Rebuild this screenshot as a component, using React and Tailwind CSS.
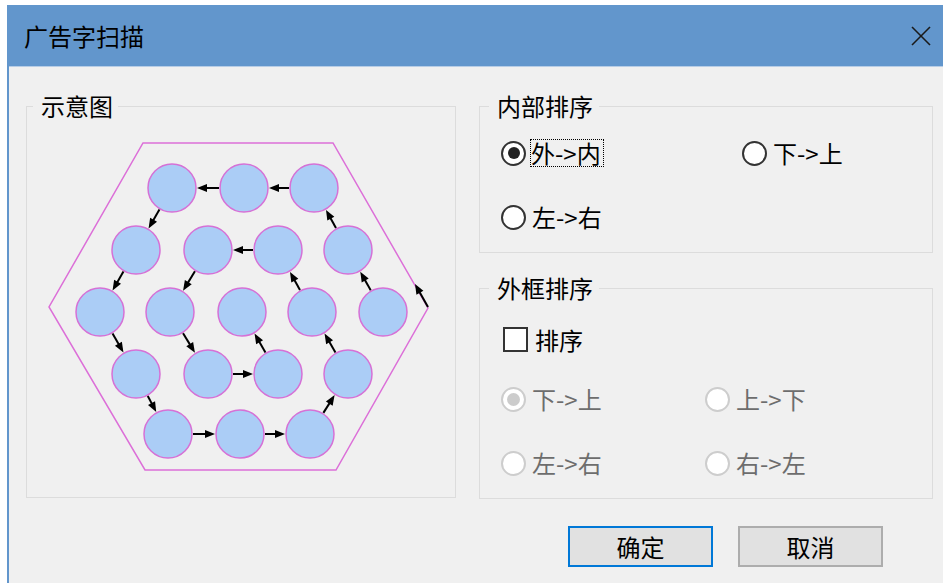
import React from "react";

const FONT = { fontFamily: '"Noto Sans CJK SC", "Noto Sans", sans-serif' };

const circles = [
  [172, 188], [244, 188], [314, 188],
  [136, 250], [208, 250], [278, 250], [348, 250],
  [100, 312], [170, 312], [242, 312], [312, 312], [383, 312],
  [136, 374], [208, 374], [278, 374], [348, 374],
  [168, 434], [240, 434], [310, 434],
];

const arrows = [
  [[314, 188], [244, 188]],
  [[244, 188], [172, 188]],
  [[172, 188], [136, 250]],
  [[136, 250], [100, 312]],
  [[100, 312], [136, 374]],
  [[136, 374], [168, 434]],
  [[168, 434], [240, 434]],
  [[240, 434], [310, 434]],
  [[310, 434], [348, 374]],
  [[348, 374], [312, 312]],
  [[312, 312], [278, 250]],
  [[278, 250], [208, 250]],
  [[208, 250], [170, 312]],
  [[170, 312], [208, 374]],
  [[208, 374], [278, 374]],
  [[278, 374], [242, 312]],
  [[383, 312], [348, 250]],
  [[348, 250], [314, 188]],
];

function Arrow({ from, to, r = 25 }) {
  const dx = to[0] - from[0];
  const dy = to[1] - from[1];
  const len = Math.hypot(dx, dy);
  const ux = dx / len;
  const uy = dy / len;
  const sx = from[0] + ux * r;
  const sy = from[1] + uy * r;
  const ex = to[0] - ux * r;
  const ey = to[1] - uy * r;
  return <ArrowSeg sx={sx} sy={sy} ex={ex} ey={ey} />;
}

function ArrowSeg({ sx, sy, ex, ey }) {
  const dx = ex - sx;
  const dy = ey - sy;
  const len = Math.hypot(dx, dy);
  const ux = dx / len;
  const uy = dy / len;
  const bx = ex - ux * 10;
  const by = ey - uy * 10;
  const px = -uy * 4;
  const py = ux * 4;
  return (
    <g>
      <line x1={sx} y1={sy} x2={bx + ux * 2} y2={by + uy * 2} stroke="#000" strokeWidth="2" />
      <polygon points={`${ex},${ey} ${bx + px},${by + py} ${bx - px},${by - py}`} fill="#000" />
    </g>
  );
}

function Diagram() {
  return (
    <svg width="427" height="378" viewBox="27 118 427 378" className="block">
      <polygon
        points="143,143 333,143 428,308 336,470 145,470 49,307"
        fill="none"
        stroke="#dc6fd8"
        strokeWidth="1.5"
      />
      {circles.map(([x, y], i) => (
        <circle key={i} cx={x} cy={y} r="24" fill="#abcdf6" stroke="#d671d6" strokeWidth="1.5" />
      ))}
      {arrows.map(([a, b], i) => (
        <Arrow key={i} from={a} to={b} />
      ))}
      <ArrowSeg sx={428} sy={307} ex={415} ey={284} />
    </svg>
  );
}

function Radio({ checked, disabled, label, focus }) {
  return (
    <div className="flex items-center h-[30px]">
      <div
        className={
          disabled
            ? "w-[25px] h-[25px] rounded-full border-2 border-[#cdcdcd] bg-white flex items-center justify-center shrink-0"
            : "w-[25px] h-[25px] rounded-full border-2 border-[#333333] bg-white flex items-center justify-center shrink-0"
        }
      >
        {checked && (
          <div
            className={
              disabled
                ? "w-[13px] h-[13px] rounded-full bg-[#cccccc]"
                : "w-[12px] h-[12px] rounded-full bg-[#222222]"
            }
          />
        )}
      </div>
      <span
        className={
          (disabled ? "text-[#6d6d6d] " : "text-black ") +
          (focus
            ? "ml-[4px] border border-dotted border-black py-[1px] pr-[2px] leading-[24px] text-[24px] whitespace-nowrap"
            : "ml-[6px] leading-[24px] text-[24px] whitespace-nowrap")
        }
      >
        {label}
      </span>
    </div>
  );
}

function Legend({ children, ml, pr }) {
  return (
    <legend className={`${ml} pl-[8px] ${pr} text-[24px] leading-[24px] text-black`}>{children}</legend>
  );
}

export default function App() {
  return (
    <div className="w-[943px] h-[583px] bg-white pt-[5px] pl-[7px] overflow-hidden" style={FONT}>
      <div className="flex flex-col h-[578px] border-l-2 border-[#6296cc] bg-[#f0f0f0]">
        <div className="h-[62px] shrink-0 bg-[#6296cc] border-b border-[#b7cde6] flex items-center justify-between pl-[15px] pr-[11px]">
          <span className="text-[24px] leading-[24px] text-black">广告字扫描</span>
          <svg width="22" height="22" viewBox="0 0 22 22">
            <line x1="2" y1="2" x2="20" y2="20" stroke="#1a1a1a" strokeWidth="1.6" />
            <line x1="20" y1="2" x2="2" y2="20" stroke="#1a1a1a" strokeWidth="1.6" />
          </svg>
        </div>
        <div className="flex-1 flex flex-col pt-[27px] pl-[17px]">
          <div className="flex gap-[23px]">
            <fieldset className="w-[430px] h-[404px] border border-[#dcdcdc]">
              <Legend ml="ml-[6px]" pr="pr-[5px]">示意图</Legend>
              <Diagram />
            </fieldset>
            <div className="flex flex-col gap-[23px]">
              <fieldset className="w-[454px] h-[159px] border border-[#dcdcdc]">
                <Legend ml="ml-[9px]" pr="pr-[6px]">内部排序</Legend>
                <div className="grid grid-cols-[241px_1fr] gap-y-[34px] pl-[21px] pt-[20px]">
                  <Radio checked focus label="外->内" />
                  <Radio label="下->上" />
                  <Radio label="左->右" />
                </div>
              </fieldset>
              <fieldset className="w-[454px] h-[223px] border border-[#dcdcdc]">
                <Legend ml="ml-[9px]" pr="pr-[6px]">外框排序</Legend>
                <div className="pl-[23px] pt-[27px] flex items-center">
                  <div className="w-[25px] h-[25px] border-2 border-[#333333] bg-white shrink-0" />
                  <span className="ml-[7px] text-[24px] leading-[24px] text-black">排序</span>
                </div>
                <div className="grid grid-cols-[204px_1fr] gap-y-[34px] pl-[21px] pt-[32px]">
                  <Radio checked disabled label="下->上" />
                  <Radio disabled label="上->下" />
                  <Radio disabled label="左->右" />
                  <Radio disabled label="右->左" />
                </div>
              </fieldset>
            </div>
          </div>
          <div className="flex justify-end gap-[25px] pr-[60px] mt-[27px]">
            <button className="w-[145px] h-[41px] border-2 border-[#0078d7] bg-[#e1e1e1] text-[24px] leading-[24px] text-black">
              确定
            </button>
            <button className="w-[145px] h-[41px] border-2 border-[#adadad] bg-[#e1e1e1] text-[24px] leading-[24px] text-black">
              取消
            </button>
          </div>
        </div>
      </div>
    </div>
  );
}
